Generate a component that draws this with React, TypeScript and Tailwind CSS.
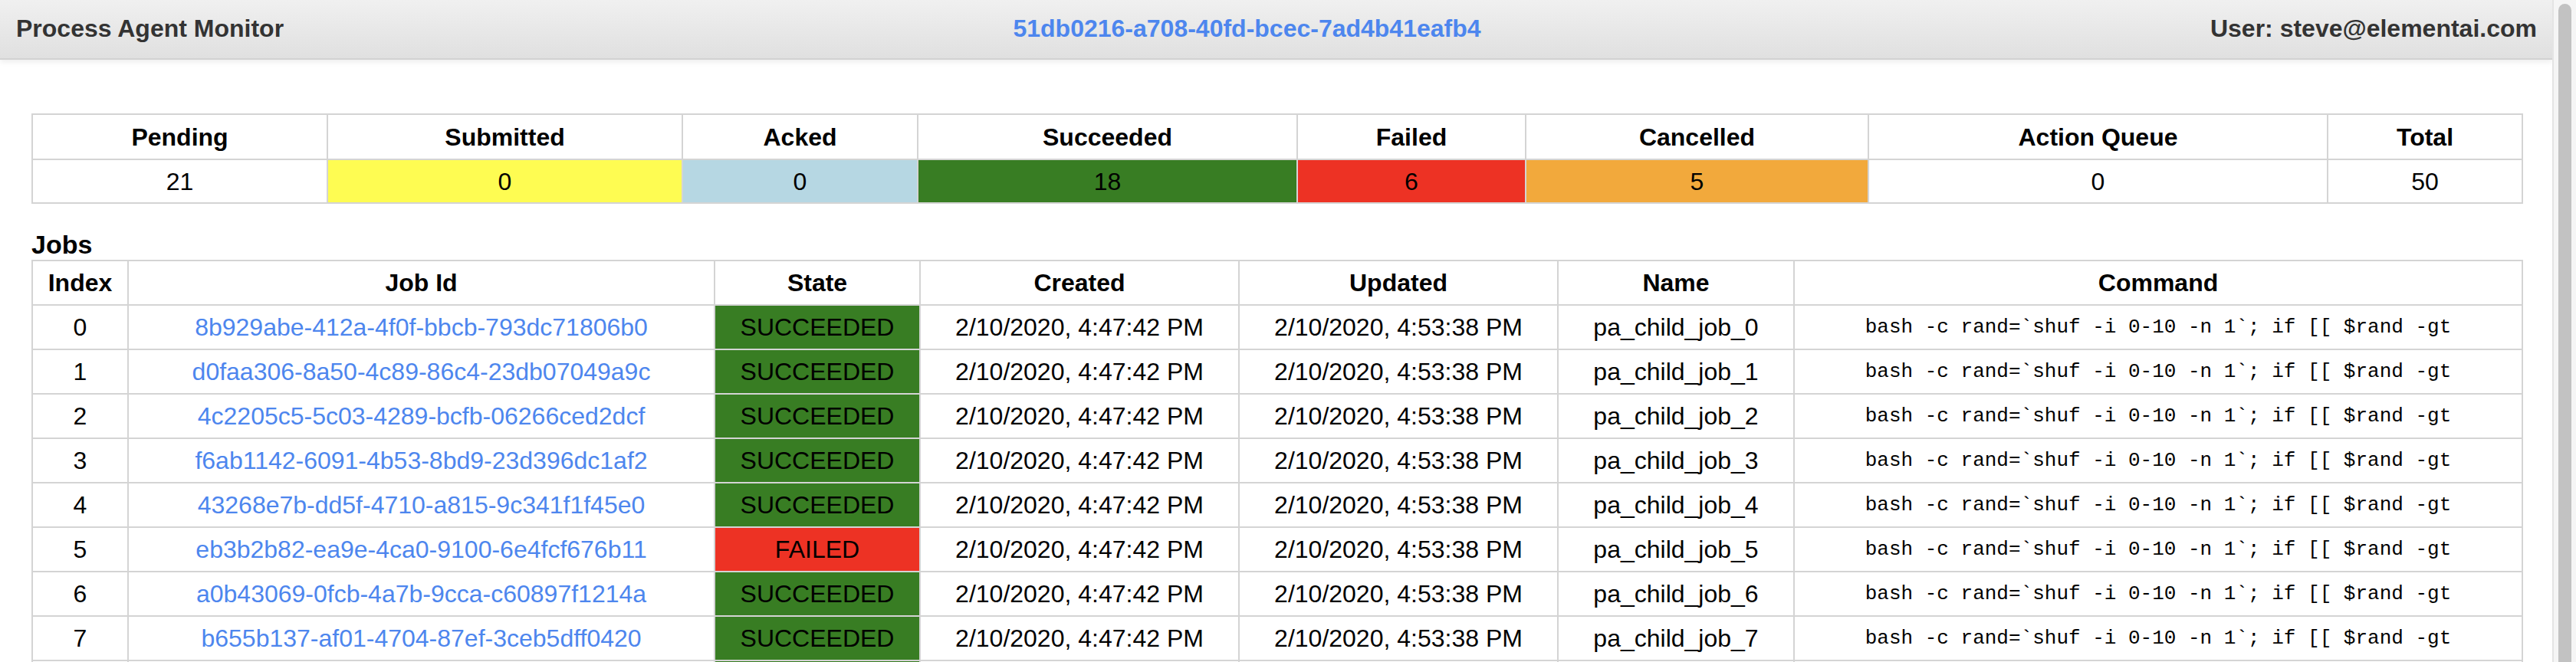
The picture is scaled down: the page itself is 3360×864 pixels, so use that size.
const summary = [
  { label: 'Pending', value: 21, width: 385, bg: 'bg-white' },
  { label: 'Submitted', value: 0, width: 463, bg: 'bg-[#fefc52]' },
  { label: 'Acked', value: 0, width: 307, bg: 'bg-[#b6d7e3]' },
  { label: 'Succeeded', value: 18, width: 495, bg: 'bg-[#387d23]' },
  { label: 'Failed', value: 6, width: 298, bg: 'bg-[#ed3224]' },
  { label: 'Cancelled', value: 5, width: 447, bg: 'bg-[#f2a93c]' },
  { label: 'Action Queue', value: 0, width: 599, bg: 'bg-white' },
  { label: 'Total', value: 50, width: 254, bg: 'bg-white' },
];

const columns = [
  { label: 'Index', width: 125 },
  { label: 'Job Id', width: 765 },
  { label: 'State', width: 268 },
  { label: 'Created', width: 416 },
  { label: 'Updated', width: 416 },
  { label: 'Name', width: 308 },
  { label: 'Command', width: 950 },
];

const jobs = [
  { id: '8b929abe-412a-4f0f-bbcb-793dc71806b0', state: 'SUCCEEDED' },
  { id: 'd0faa306-8a50-4c89-86c4-23db07049a9c', state: 'SUCCEEDED' },
  { id: '4c2205c5-5c03-4289-bcfb-06266ced2dcf', state: 'SUCCEEDED' },
  { id: 'f6ab1142-6091-4b53-8bd9-23d396dc1af2', state: 'SUCCEEDED' },
  { id: '43268e7b-dd5f-4710-a815-9c341f1f45e0', state: 'SUCCEEDED' },
  { id: 'eb3b2b82-ea9e-4ca0-9100-6e4fcf676b11', state: 'FAILED' },
  { id: 'a0b43069-0fcb-4a7b-9cca-c60897f1214a', state: 'SUCCEEDED' },
  { id: 'b655b137-af01-4704-87ef-3ceb5dff0420', state: 'SUCCEEDED' },
];

const command = 'bash -c rand=`shuf -i 0-10 -n 1`; if [[ $rand -gt';

const cell = 'border-2 border-[#d4d4d4] p-0 text-center align-middle';

export default function App() {
  return (
    <div className="flex h-screen w-full overflow-hidden bg-white font-['Liberation_Sans',Arial,sans-serif] text-[32px] text-black">
      <div className="min-w-0 flex-1 overflow-hidden">
        <header className="relative z-10 flex h-[78px] items-center justify-between border-b-2 border-[#d2d2d2] bg-linear-to-b from-[#f0f0f0] to-[#e0e0e0] pl-[21px] pr-[20px] pb-[3px] font-bold text-[#333] shadow-[0_3px_7px_rgba(0,0,0,0.07)]">
          <span>Process Agent Monitor</span>
          <span className="text-[#4d86ee]">51db0216-a708-40fd-bcec-7ad4b41eafb4</span>
          <span>User: steve@elementai.com</span>
        </header>

        <main className="pl-[41px] pr-[40px]">
          <table className="mt-[70px] w-[3248px] table-fixed border-collapse">
            <colgroup>
              {summary.map((s) => (
                <col key={s.label} style={{ width: s.width }} />
              ))}
            </colgroup>
            <thead>
              <tr className="h-[59px]">
                {summary.map((s) => (
                  <th key={s.label} className={`${cell} font-bold`}>
                    {s.label}
                  </th>
                ))}
              </tr>
            </thead>
            <tbody>
              <tr className="h-[57px]">
                {summary.map((s) => (
                  <td key={s.label} className={`${cell} ${s.bg}`}>
                    {s.value}
                  </td>
                ))}
              </tr>
            </tbody>
          </table>

          <h3 className="mt-[34px] h-[39px] text-[34px] font-bold leading-[39px]">Jobs</h3>

          <table className="w-[3248px] table-fixed border-collapse">
            <colgroup>
              {columns.map((c) => (
                <col key={c.label} style={{ width: c.width }} />
              ))}
            </colgroup>
            <thead>
              <tr className="h-[58px]">
                {columns.map((c) => (
                  <th key={c.label} className={`${cell} font-bold`}>
                    {c.label}
                  </th>
                ))}
              </tr>
            </thead>
            <tbody>
              {jobs.map((job, i) => (
                <tr key={i} className="h-[58px]">
                  <td className={cell}>{i}</td>
                  <td className={`${cell} text-[#4d86ee]`}>{job.id}</td>
                  <td className={`${cell} ${job.state === 'FAILED' ? 'bg-[#ed3224]' : 'bg-[#387d23]'}`}>
                    {job.state}
                  </td>
                  <td className={cell}>2/10/2020, 4:47:42 PM</td>
                  <td className={cell}>2/10/2020, 4:53:38 PM</td>
                  <td className={cell}>pa_child_job_{i}</td>
                  <td className={`${cell} font-['Liberation_Mono',monospace] text-[26px]`}>{command}</td>
                </tr>
              ))}
              {/* next row, only its top edge shows in the viewport */}
              <tr className="h-[58px]">
                <td className={cell} />
                <td className={cell} />
                <td className={`${cell} bg-[#387d23]`} />
                <td className={cell} />
                <td className={cell} />
                <td className={cell} />
                <td className={cell} />
              </tr>
            </tbody>
          </table>
        </main>
      </div>

      <div className="w-[31px] shrink-0 border-l-2 border-[#e4e4e4] bg-[#f5f5f5] pt-[5px] pl-[6px]">
        <div className="h-[900px] w-[17px] rounded-full bg-[#c2c2c2]" />
      </div>
    </div>
  );
}
